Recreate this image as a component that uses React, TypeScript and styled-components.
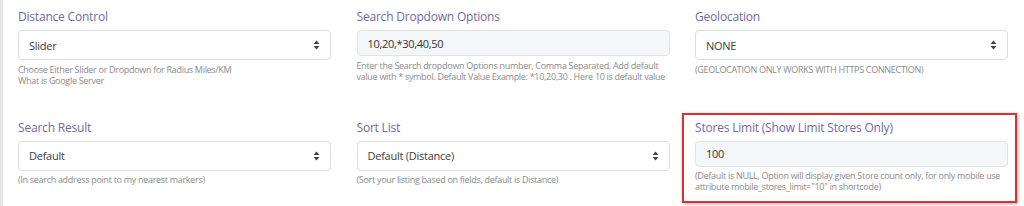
import React from "react";
import styled, { createGlobalStyle } from "styled-components";

const GlobalStyle = createGlobalStyle`
  html, body {
    margin: 0;
    padding: 0;
    background: #ffffff;
    font-family: "Open Sans", "Noto Sans", Arial, sans-serif;
  }
  * { box-sizing: border-box; }
`;

const Page = styled.div`
  width: 1024px;
  height: 206px;
  overflow: hidden;
  border-left: 3px solid #e6e6e6;
  padding: 8px 0 0 15px;
`;

const Grid = styled.div`
  display: grid;
  grid-template-columns: 313px 313px 313px;
  column-gap: 25.5px;
  row-gap: 33px;
  align-items: start;
`;

const Field = styled.div<{ $highlight?: boolean }>`
  position: relative;
  display: flex;
  flex-direction: column;
  ${(p) =>
    p.$highlight &&
    `
    &::before {
      content: "";
      position: absolute;
      left: -13px;
      top: -6px;
      width: 331px;
      height: 86px;
      border: 2px solid #e02f2f;
      box-shadow: 1px 1px 3px rgba(0, 0, 0, 0.35);
      pointer-events: none;
    }
  `}
`;

const Label = styled.label`
  font-size: 12px;
  letter-spacing: -0.2px;
  line-height: 18px;
  color: #7169a6;
  margin-bottom: 4px;
  white-space: nowrap;
`;

const SelectBox = styled.div`
  height: 30px;
  border: 1px solid #dcdde0;
  border-radius: 4px;
  background: #ffffff;
  display: flex;
  align-items: center;
  justify-content: space-between;
  padding: 0 10px 0 10px;
  font-size: 11px;
  letter-spacing: -0.25px;
  color: #3d3d3d;
`;

const InputBox = styled.div`
  height: 26px;
  border: 1px solid #e1e3e6;
  border-radius: 4px;
  background: #f5f6f8;
  display: flex;
  align-items: center;
  padding: 0 10px;
  font-size: 11px;
  letter-spacing: -0.3px;
  color: #333333;
`;

const Help = styled.div`
  margin-top: 3.5px;
  font-size: 9px;
  letter-spacing: -0.3px;
  line-height: 11px;
  color: #8b8b8b;
  white-space: nowrap;
`;

const Arrows = () => (
  <svg width="7" height="10" viewBox="0 0 7 10" aria-hidden="true">
    <path d="M3.5 0.5 L6.5 4 L0.5 4 Z" fill="#444" />
    <path d="M3.5 9.5 L6.5 6 L0.5 6 Z" fill="#444" />
  </svg>
);

type Item = {
  kind: "select" | "input";
  label: string;
  value: string;
  help: string[];
  highlight?: boolean;
};

const items: Item[] = [
  {
    kind: "select",
    label: "Distance Control",
    value: "Slider",
    help: ["Choose Either Slider or Dropdown for Radius Miles/KM", "What is Google Server"],
  },
  {
    kind: "input",
    label: "Search Dropdown Options",
    value: "10,20,*30,40,50",
    help: [
      "Enter the Search dropdown Options number, Comma Separated. Add default",
      "value with * symbol. Default Value Example: *10,20,30 . Here 10 is default value",
    ],
  },
  {
    kind: "select",
    label: "Geolocation",
    value: "NONE",
    help: ["(GEOLOCATION ONLY WORKS WITH HTTPS CONNECTION)"],
  },
  {
    kind: "select",
    label: "Search Result",
    value: "Default",
    help: ["(In search address point to my nearest markers)"],
  },
  {
    kind: "select",
    label: "Sort List",
    value: "Default (Distance)",
    help: ["(Sort your listing based on fields, default is Distance)"],
  },
  {
    kind: "input",
    label: "Stores Limit (Show Limit Stores Only)",
    value: "100",
    highlight: true,
    help: [
      "(Default is NULL, Option will display given Store count only, for only mobile use",
      'attribute mobile_stores_limit="10" in shortcode)',
    ],
  },
];

export default function App() {
  return (
    <>
      <GlobalStyle />
      <Page>
        <Grid>
          {items.map((it) => (
            <Field key={it.label} $highlight={it.highlight}>
              <Label>{it.label}</Label>
              {it.kind === "select" ? (
                <SelectBox>
                  <span>{it.value}</span>
                  <Arrows />
                </SelectBox>
              ) : (
                <InputBox>{it.value}</InputBox>
              )}
              <Help>
                {it.help.map((h) => (
                  <div key={h}>{h}</div>
                ))}
              </Help>
            </Field>
          ))}
        </Grid>
      </Page>
    </>
  );
}
